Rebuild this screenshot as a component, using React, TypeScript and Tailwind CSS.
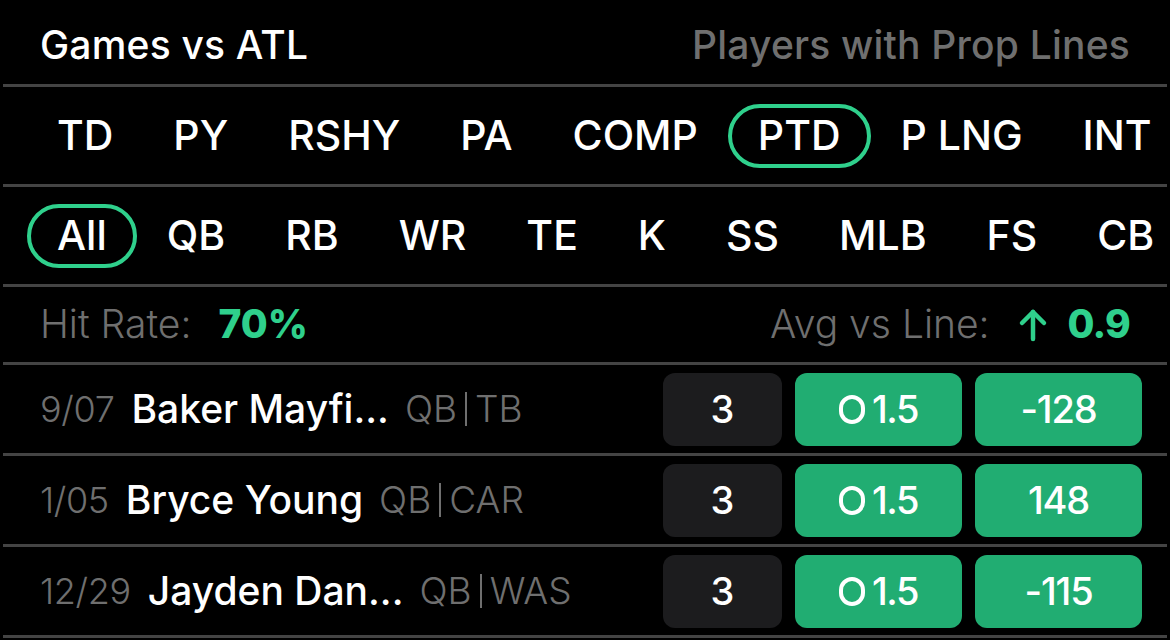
import React from 'react';

const font = { fontFamily: 'Inter, "Noto Sans", sans-serif' };

const statTabs = ['TD', 'PY', 'RSHY', 'PA', 'COMP', 'PTD', 'P LNG', 'INT'];
const posTabs = ['All', 'QB', 'RB', 'WR', 'TE', 'K', 'SS', 'MLB', 'FS', 'CB'];

const games = [
  { date: '9/07', name: 'Baker Mayfi...', pos: 'QB', team: 'TB', result: '3', line: '1.5', odds: '-128' },
  { date: '1/05', name: 'Bryce Young', pos: 'QB', team: 'CAR', result: '3', line: '1.5', odds: '148' },
  { date: '12/29', name: 'Jayden Dan...', pos: 'QB', team: 'WAS', result: '3', line: '1.5', odds: '-115' },
];

const Divider = () => <div className="mx-[3px] h-[3px] bg-[#444444]" />;

interface TabRowProps {
  items: string[];
  active: string;
}

const TabRow: React.FC<TabRowProps> = ({ items, active }) => (
  <div className="flex h-[97px] items-center overflow-hidden whitespace-nowrap pl-[27px]">
    {items.map((item) => (
      <div
        key={item}
        className={
          item === active
            ? 'flex h-[64px] shrink-0 items-center rounded-full border-[4px] border-[#2fd08c] px-[26px] text-[41px] font-medium text-white'
            : 'flex h-[64px] shrink-0 items-center px-[30px] text-[41px] font-medium text-white'
        }
      >
        {item}
      </div>
    ))}
  </div>
);

export default function App() {
  return (
    <div className="min-h-[640px] w-[1170px] overflow-hidden bg-black" style={font}>
      {/* header */}
      <div className="flex h-[84px] items-center justify-between px-[40px] pt-[6px]">
        <span className="text-[39px] font-medium tracking-[0.005em] text-white">Games vs ATL</span>
        <span className="text-[39px] font-medium tracking-[0.005em] text-[#6f6f6f]">Players with Prop Lines</span>
      </div>
      <Divider />
      <TabRow items={statTabs} active="PTD" />
      <Divider />
      <TabRow items={posTabs} active="All" />
      <Divider />

      {/* stats */}
      <div className="flex h-[75px] items-center justify-between px-[40px] text-[39px]">
        <div className="flex items-center gap-[27px]">
          <span className="font-light text-[#6f6f6f]">Hit Rate:</span>
          <span className="font-extrabold text-[#2fd08c]">70%</span>
        </div>
        <div className="flex items-center">
          <span className="font-light text-[#6f6f6f]">Avg vs Line:</span>
          <svg className="ml-[28px] mr-[20px]" width="30" height="34" viewBox="0 0 30 34" fill="none" stroke="#2fd08c" strokeWidth="4.5" strokeLinecap="round" strokeLinejoin="round">
            <path d="M15 31V4" />
            <path d="M4 15L15 4l11 11" />
          </svg>
          <span className="font-extrabold tracking-[-0.02em] text-[#2fd08c]">0.9</span>
        </div>
      </div>
      <Divider />

      {games.map((g) => (
        <React.Fragment key={g.date}>
          <div className="flex h-[88px] items-center justify-between pl-[40px] pr-[28px]">
            <div className="flex items-center whitespace-nowrap">
              <span className="text-[36px] font-light tracking-[-0.01em] text-[#6f6f6f]">{g.date}</span>
              <span className="ml-[17px] text-[39px] font-medium text-white">{g.name}</span>
              <span className="ml-[16px] flex items-center text-[37px] font-light text-[#6f6f6f]">
                {g.pos}
                <span className="mx-[8px] h-[34px] w-[2px] bg-[#6f6f6f]" />
                {g.team}
              </span>
            </div>
            <div className="flex items-center gap-[13px] text-[38px] font-medium text-white">
              <div className="flex h-[73px] w-[119px] items-center justify-center rounded-[12px] bg-[#1c1c1e]">{g.result}</div>
              <div className="flex h-[73px] w-[167px] items-center justify-center gap-[7px] rounded-[12px] bg-[#21ad72]">
                <span className="inline-block h-[29px] w-[26px] rounded-full border-[4px] border-white" />
                <span className="tracking-[-0.04em]">{g.line}</span>
              </div>
              <div className="flex h-[73px] w-[167px] items-center justify-center rounded-[12px] bg-[#21ad72] tracking-[-0.03em]">{g.odds}</div>
            </div>
          </div>
          <Divider />
        </React.Fragment>
      ))}
    </div>
  );
}
